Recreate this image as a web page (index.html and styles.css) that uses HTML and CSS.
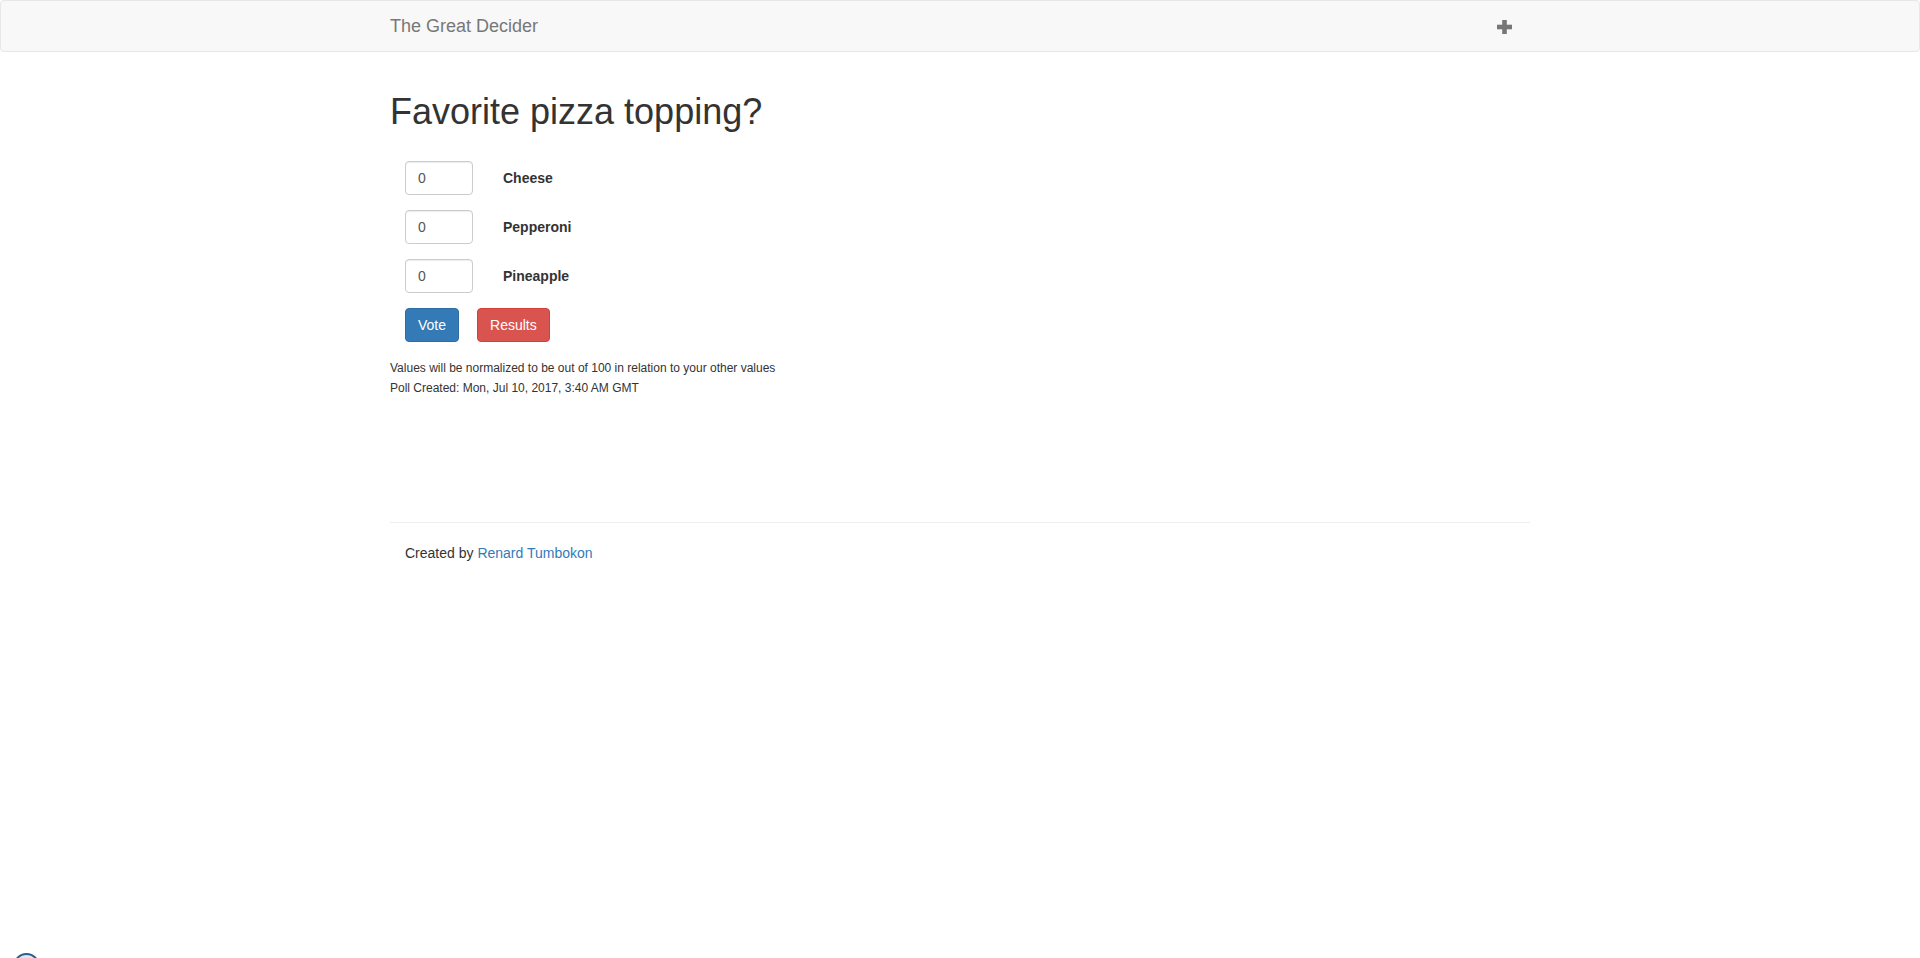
FILE: index.html
```html
<!DOCTYPE html>
<html lang="en">
<head>
<meta charset="utf-8">
<title>The Great Decider</title>
<link rel="stylesheet" href="styles.css">
</head>
<body>
<nav class="navbar">
  <div class="container nav-inner">
    <a class="brand" href="#">The Great Decider</a>
    <a class="nav-plus" href="#" aria-label="New poll">
      <svg width="15" height="14" viewBox="0 0 15 14" aria-hidden="true">
        <rect x="5.2" y="0" width="4.6" height="14" fill="#777"/>
        <rect x="0" y="4.7" width="15" height="4.6" fill="#777"/>
      </svg>
    </a>
  </div>
</nav>

<main class="container main">
  <h1 class="title">Favorite pizza topping?</h1>
  <form class="poll">
    <div class="option">
      <input class="field" type="text" value="0">
      <label class="opt-label">Cheese</label>
    </div>
    <div class="option">
      <input class="field" type="text" value="0">
      <label class="opt-label">Pepperoni</label>
    </div>
    <div class="option">
      <input class="field" type="text" value="0">
      <label class="opt-label">Pineapple</label>
    </div>
    <div class="actions">
      <button type="button" class="btn btn-primary">Vote</button>
      <button type="button" class="btn btn-danger">Results</button>
    </div>
  </form>
  <div class="notes">
    <div class="note">Values will be normalized to be out of 100 in relation to your other values</div>
    <div class="note">Poll Created: Mon, Jul 10, 2017, 3:40 AM GMT</div>
  </div>
  <hr class="divider">
  <footer class="footer">Created by <a href="#" class="link">Renard Tumbokon</a></footer>
</main>

<div class="float-circle"></div>
</body>
</html>
```

FILE: styles.css
```css
* { box-sizing: border-box; }

html, body {
  margin: 0;
  padding: 0;
  background: #fff;
}

body {
  font-family: "Liberation Sans", Arial, Helvetica, sans-serif;
  font-size: 14px;
  line-height: 1.42857;
  color: #333;
}

.container {
  width: 1170px;
  margin: 0 auto;
  padding: 0 15px;
}

.main {
  display: flow-root;
}

.navbar {
  height: 52px;
  background: #f8f8f8;
  border: 1px solid #e7e7e7;
  border-radius: 4px;
  margin-bottom: 20px;
}

.nav-inner {
  height: 50px;
  display: flex;
  align-items: center;
  justify-content: space-between;
}

.brand {
  font-size: 18px;
  line-height: 20px;
  color: #777;
  text-decoration: none;
}

.nav-plus {
  display: flex;
  align-items: center;
  margin-right: 18px;
  margin-top: 2px;
}

.title {
  font-size: 36px;
  font-weight: 500;
  line-height: 1.1;
  margin: 20px 0 10px;
  color: #333;
}

.poll {
  margin-top: 29px;
  padding-left: 15px;
}

.option {
  display: flex;
  align-items: center;
  height: 34px;
  margin-bottom: 15px;
}

.field {
  width: 67.5px;
  height: 34px;
  padding: 6px 12px;
  font-family: inherit;
  font-size: 14px;
  color: #555;
  background: #fff;
  border: 1px solid #ccc;
  border-radius: 4px;
  box-shadow: inset 0 1px 1px rgba(0,0,0,.075);
}

.opt-label {
  margin-left: 30.5px;
  padding-top: 2px;
  font-weight: 700;
  color: #333;
}

.actions {
  display: flex;
  gap: 18px;
  margin-bottom: 16px;
}

.btn {
  height: 34px;
  padding: 6px 12px;
  font-family: inherit;
  font-size: 14px;
  line-height: 20px;
  color: #fff;
  border: 1px solid transparent;
  border-radius: 4px;
}

.btn-primary {
  background: #337ab7;
  border-color: #2e6da4;
}

.btn-danger {
  background: #d9534f;
  border-color: #d43f3a;
}

.notes {
  font-size: 12px;
  line-height: 20px;
  color: #333;
}

.divider {
  margin: 124px 0 20px;
  border: 0;
  border-top: 1px solid #eee;
}

.footer {
  padding-left: 15px;
  line-height: 20px;
}

.link {
  color: #337ab7;
  text-decoration: none;
}

.float-circle {
  position: fixed;
  left: 13px;
  top: 953px;
  width: 27px;
  height: 27px;
  border-radius: 50%;
  border: 2px solid #2b5f8c;
  background: #dde5ee;
}
```
